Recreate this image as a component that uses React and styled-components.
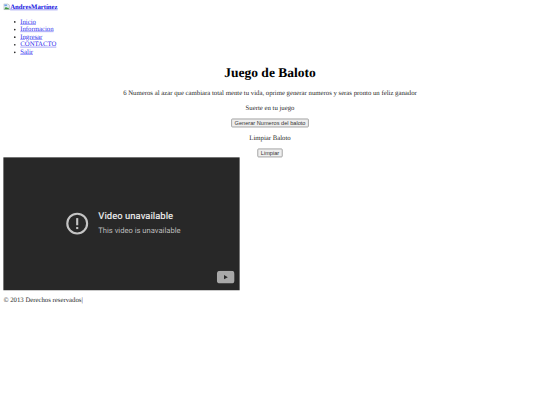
import React from "react";
import styled, { createGlobalStyle } from "styled-components";

const Global = createGlobalStyle`
  html, body { width: 540px; height: 405px; margin: 0; overflow: hidden; background: #fff; }
`;

const Page = styled.div`
  width: 1280px;
  height: 960px;
  box-sizing: border-box;
  padding: 8px;
  transform: scale(0.421875);
  transform-origin: 0 0;
  text-rendering: geometricPrecision;
  font-family: "Liberation Serif", "Times New Roman", serif;
  font-size: 16px;
  color: #2a2a2a;
`;
const BrandLink = styled.a`
  font-weight: 700;
  color: #1414e0;
  text-decoration: underline;
`;
const BrokenImage = styled.svg`
  width: 16px;
  height: 16px;
  vertical-align: -2px;
`;
const NavList = styled.ul`
  margin: 16px 0;
  padding-left: 40px;
`;
const NavLink = styled.a`
  color: #3030ee;
  text-decoration: underline;
`;
const Game = styled.section`
  text-align: center;
`;
const Title = styled.h1`
  font-size: 32px;
  margin: 21.44px 0;
  color: #000;
`;
const Copy = styled.p`
  margin: 16px 0;
`;
const ActionButton = styled.button`
  font: 13.333px "Liberation Sans", Arial, sans-serif;
  color: #333;
  background: #efefef;
  border: 2px solid #969696;
  border-radius: 3px;
  padding: 1px 6px;
`;
const Video = styled.div`
  width: 560px;
  height: 315px;
  background: #282828;
  display: flex;
  align-items: center;
  position: relative;
  font-family: Roboto, "Liberation Sans", Arial, sans-serif;
`;
const Notice = styled.div`
  display: flex;
  align-items: center;
  gap: 22px;
  margin-left: 147px;
`;
const NoticeTitle = styled.div`
  font-size: 22.5px;
  font-weight: 500;
  color: #e6e6e6;
  line-height: 28px;
`;
const NoticeBody = styled.div`
  font-size: 18px;
  color: #bdbdbd;
  line-height: 28px;
  margin-top: 8px;
`;
const WatchBadge = styled.svg`
  position: absolute;
  right: 12px;
  bottom: 16px;
  width: 42px;
  height: 30px;
`;
const Footer = styled.p`
  margin: 16px 0;
`;

export default function App() {
  return (
    <Page>
      <Global />
      <BrandLink href="#">
        <BrokenImage viewBox="0 0 16 16">
          <path d="M1 1h10l4 4v10H1z" fill="#dfe9f7" stroke="#8f8f8f" />
          <path d="M2 14l4-6 3 3 2-1 3 4z" fill="#3f9a3f" />
          <path d="M2.5 2.5h6v4h-6z" fill="#6fa3e6" />
        </BrokenImage>
        AndresMartínez
      </BrandLink>
      <NavList>
        {["Inicio", "Informacion", "Ingresar", "CONTACTO", "Salir"].map((t) => (
          <li key={t}><NavLink href="#">{t}</NavLink></li>
        ))}
      </NavList>
      <Game>
        <Title>Juego de Baloto</Title>
        <Copy>6 Numeros al azar que cambiara total mente tu vida, oprime generar numeros y seras pronto un feliz ganador</Copy>
        <Copy>Suerte en tu juego</Copy>
        <ActionButton>Generar Numeros del baloto</ActionButton>
        <Copy>Limpiar Baloto</Copy>
        <ActionButton>Limpiar</ActionButton>
      </Game>
      <Video>
        <Notice>
          <svg width="56" height="56" viewBox="0 0 56 56">
            <circle cx="28" cy="28" r="23.5" fill="none" stroke="#c4c4c4" strokeWidth="5" />
            <rect x="25.5" y="15" width="5" height="17" fill="#c4c4c4" />
            <rect x="25.5" y="36" width="5" height="5" fill="#c4c4c4" />
          </svg>
          <div>
            <NoticeTitle>Video unavailable</NoticeTitle>
            <NoticeBody>This video is unavailable</NoticeBody>
          </div>
        </Notice>
        <WatchBadge viewBox="0 0 42 30">
          <rect width="42" height="30" rx="8" fill="#a8a8a8" />
          <path d="M17 10l9 5-9 5z" fill="#282828" />
        </WatchBadge>
      </Video>
      <Footer>© 2013 Derechos reservados|</Footer>
    </Page>
  );
}
